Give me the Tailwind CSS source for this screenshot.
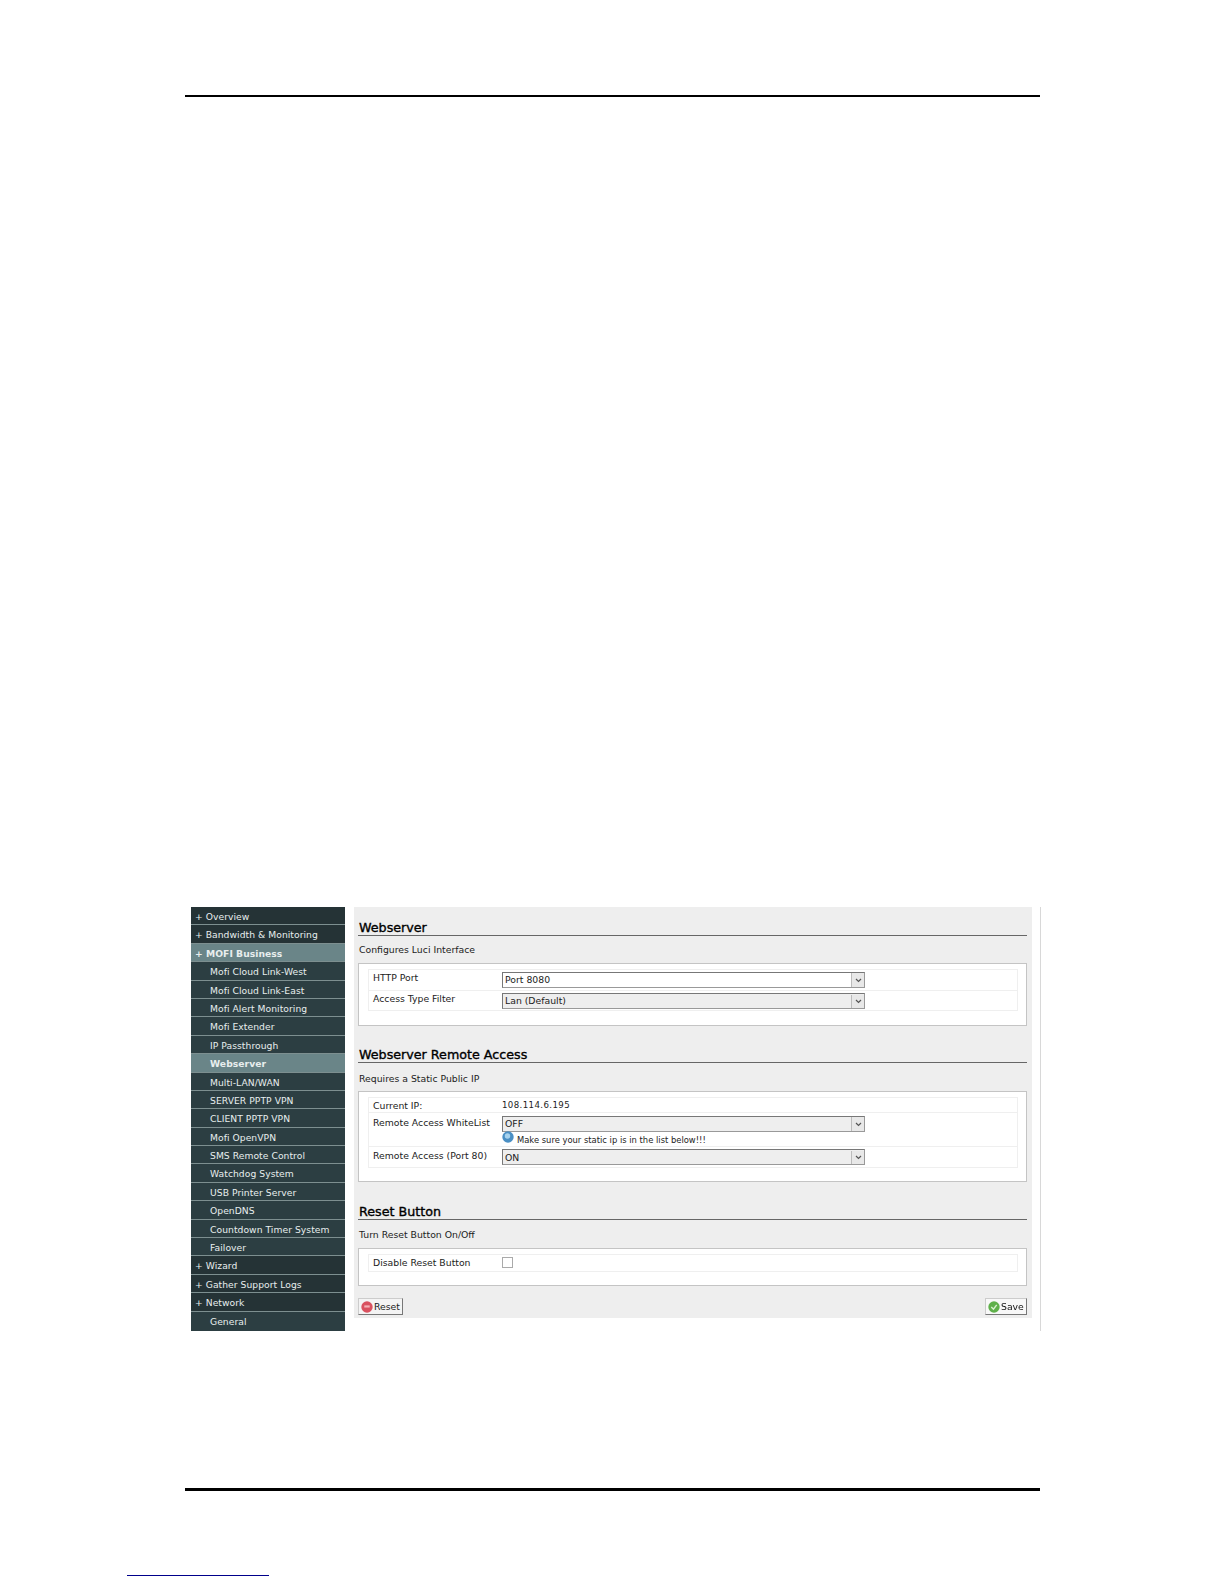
<!doctype html>
<html><head><meta charset="utf-8"><script src="https://cdn.jsdelivr.net/npm/@tailwindcss/browser@4"></script></head>
<body class="bg-white font-['DejaVu_Sans',sans-serif] text-[#222]">
<div class="relative h-[1584px] w-[1224px] overflow-hidden pt-[95px]">
  <div class="ml-[185px] h-[2px] w-[855px] bg-black"></div>
  <div class="ml-[191px] mt-[810px] flex h-[424px] w-[851px] items-start blur-[0.5px]">
    <ul class="h-[424px] w-[154px] shrink-0 overflow-hidden bg-[#2c3e42] text-[9.2px] leading-[17.4px] tracking-[0.05px] text-[#e8eeee]">
      <li class="border-b border-[#7d8f90] bg-[#253336] pl-[4px] pt-[2px] h-[18.400px] leading-[16px]">+ <span>Overview</span></li>
      <li class="border-b border-[#7d8f90] bg-[#253336] pl-[4px] pt-[2px] h-[18.400px] leading-[16px]">+ <span>Bandwidth &amp; Monitoring</span></li>
      <li class="border-b border-[#7d8f90] bg-[#6a8588] pl-[4px] pt-[2px] h-[18.400px] leading-[16px] font-bold">+ <span>MOFI Business</span></li>
      <li class="border-b border-[#7d8f90] pl-[19px] pt-[2px] h-[18.400px] leading-[16px]">Mofi Cloud Link-West</li>
      <li class="border-b border-[#7d8f90] pl-[19px] pt-[2px] h-[18.400px] leading-[16px]">Mofi Cloud Link-East</li>
      <li class="border-b border-[#7d8f90] pl-[19px] pt-[2px] h-[18.400px] leading-[16px]">Mofi Alert Monitoring</li>
      <li class="border-b border-[#7d8f90] pl-[19px] pt-[2px] h-[18.400px] leading-[16px]">Mofi Extender</li>
      <li class="border-b border-[#7d8f90] pl-[19px] pt-[2px] h-[18.400px] leading-[16px]">IP Passthrough</li>
      <li class="border-b border-[#7d8f90] bg-[#6a8588] pl-[19px] pt-[2px] h-[18.400px] leading-[16px] font-bold">Webserver</li>
      <li class="border-b border-[#7d8f90] pl-[19px] pt-[2px] h-[18.400px] leading-[16px]">Multi-LAN/WAN</li>
      <li class="border-b border-[#7d8f90] pl-[19px] pt-[2px] h-[18.400px] leading-[16px]">SERVER PPTP VPN</li>
      <li class="border-b border-[#7d8f90] pl-[19px] pt-[2px] h-[18.400px] leading-[16px]">CLIENT PPTP VPN</li>
      <li class="border-b border-[#7d8f90] pl-[19px] pt-[2px] h-[18.400px] leading-[16px]">Mofi OpenVPN</li>
      <li class="border-b border-[#7d8f90] pl-[19px] pt-[2px] h-[18.400px] leading-[16px]">SMS Remote Control</li>
      <li class="border-b border-[#7d8f90] pl-[19px] pt-[2px] h-[18.400px] leading-[16px]">Watchdog System</li>
      <li class="border-b border-[#7d8f90] pl-[19px] pt-[2px] h-[18.400px] leading-[16px]">USB Printer Server</li>
      <li class="border-b border-[#7d8f90] pl-[19px] pt-[2px] h-[18.400px] leading-[16px]">OpenDNS</li>
      <li class="border-b border-[#7d8f90] pl-[19px] pt-[2px] h-[18.400px] leading-[16px]">Countdown Timer System</li>
      <li class="border-b border-[#7d8f90] pl-[19px] pt-[2px] h-[18.400px] leading-[16px]">Failover</li>
      <li class="border-b border-[#7d8f90] bg-[#253336] pl-[4px] pt-[2px] h-[18.400px] leading-[16px]">+ <span>Wizard</span></li>
      <li class="border-b border-[#7d8f90] bg-[#253336] pl-[4px] pt-[2px] h-[18.400px] leading-[16px]">+ <span>Gather Support Logs</span></li>
      <li class="border-b border-[#7d8f90] bg-[#253336] pl-[4px] pt-[2px] h-[18.400px] leading-[16px]">+ <span>Network</span></li>
      <li class="pl-[19px] pt-[2px] leading-[16px]">General</li>
    </ul>
    <main class="ml-[9px] h-[411px] w-[678px] shrink-0 bg-[#eeeeee] pl-[4px] pr-[5px] pt-[12px] text-[9.3px]">
      <h2 class="h-[17px] border-b border-[#666] pl-[1px] text-[12.7px] leading-[17px] text-black [-webkit-text-stroke:0.35px_#000]">Webserver</h2>
      <p class="mt-[8px] h-[12px] pl-[1px] leading-[12px]">Configures Luci Interface</p>
      <section class="mt-[7px] h-[63px] border border-[#c4c4c4] bg-white pl-[9px] pr-[8px] pt-[5px]">
        <div class="flex h-[21px] items-center border border-b-0 border-[#efefef] pl-[4px]"><span class="mb-[4px] w-[129px]">HTTP Port</span>
          <div class="flex h-[16px] w-[363px] items-center justify-between border border-[#999] border-t-[#777] border-l-[#777] bg-white pl-[2px]">Port 8080<span class="flex h-full w-[13px] items-center justify-center border-l border-[#bbb] bg-[#e8e8e8]"><svg width="7" height="5" viewBox="0 0 7 5"><path d="M1 1l2.500 2.500L6 1" fill="none" stroke="#555" stroke-width="1.200"/></svg></span></div></div>
        <div class="flex h-[21px] items-center border border-t-[#efefef] border-[#efefef] pl-[4px]"><span class="mb-[3px] w-[129px]">Access Type Filter</span>
          <div class="flex h-[16px] w-[363px] items-center justify-between border border-[#999] border-t-[#777] border-l-[#777] bg-[#eeeeee] pl-[2px] pt-[1px]">Lan (Default)<span class="flex h-full w-[13px] items-center justify-center border-l border-[#bbb] bg-[#e8e8e8]"><svg width="7" height="5" viewBox="0 0 7 5"><path d="M1 1l2.500 2.500L6 1" fill="none" stroke="#555" stroke-width="1.200"/></svg></span></div></div>
      </section>
      <h2 class="mt-[21px] h-[16px] border-b border-[#666] pl-[1px] text-[12.7px] leading-[15px] text-black [-webkit-text-stroke:0.35px_#000]">Webserver Remote Access</h2>
      <p class="mt-[10px] h-[12px] pl-[1px] leading-[12px]">Requires a Static Public IP</p>
      <section class="mt-[6px] h-[91px] border border-[#c4c4c4] bg-white pl-[9px] pr-[8px] pt-[5px]">
        <div class="flex h-[16px] items-center border border-[#efefef] pl-[4px]"><span class="mt-[1px] w-[129px]">Current IP:</span><span class="text-[8.6px] tracking-[0.4px]">108.114.6.195</span></div>
        <div class="flex h-[34px] border-x border-b border-[#efefef] pl-[4px]"><span class="mt-[3px] w-[129px]">Remote Access WhiteList</span>
          <div class="pt-[3px]">
            <div class="flex h-[16px] w-[363px] items-center justify-between border border-[#999] border-t-[#777] border-l-[#777] bg-[#eeeeee] pl-[2px]">OFF<span class="flex h-full w-[13px] items-center justify-center border-l border-[#bbb] bg-[#e8e8e8]"><svg width="7" height="5" viewBox="0 0 7 5"><path d="M1 1l2.500 2.500L6 1" fill="none" stroke="#555" stroke-width="1.200"/></svg></span></div>
            <div class="flex h-[14px] items-center text-[8.4px]"><svg class="mr-[3px] mb-[4px]" width="12" height="12" viewBox="0 0 11 11"><circle cx="5.500" cy="5.500" r="5.200" fill="#4a8fc4"/><circle cx="5" cy="4.500" r="2.500" fill="#a6d2ee"/></svg><span class="mt-[2px]">Make sure your static ip is in the list below!!!</span></div>
          </div></div>
        <div class="flex h-[21px] items-center border-x border-b border-[#efefef] pl-[4px]"><span class="mb-[2px] w-[129px]">Remote Access (Port 80)</span>
          <div class="flex h-[16px] w-[363px] items-center justify-between border border-[#999] border-t-[#777] border-l-[#777] bg-[#eeeeee] pl-[2px] pt-[1px]">ON<span class="flex h-full w-[13px] items-center justify-center border-l border-[#bbb] bg-[#e8e8e8]"><svg width="7" height="5" viewBox="0 0 7 5"><path d="M1 1l2.500 2.500L6 1" fill="none" stroke="#555" stroke-width="1.200"/></svg></span></div></div>
      </section>
      <h2 class="mt-[22px] h-[16px] border-b border-[#666] pl-[1px] text-[12.7px] leading-[15px] text-black [-webkit-text-stroke:0.35px_#000]">Reset Button</h2>
      <p class="mt-[9px] h-[12px] pl-[1px] leading-[12px]">Turn Reset Button On/Off</p>
      <section class="mt-[7px] h-[38px] border border-[#c4c4c4] bg-white pl-[9px] pr-[8px] pt-[5px]">
        <div class="flex h-[18px] items-center border border-[#efefef] pl-[4px]"><span class="w-[129px]">Disable Reset Button</span><span class="mb-[2px] h-[11px] w-[11px] border border-[#aaa] bg-white"></span></div>
      </section>
      <div class="mt-[12px] flex justify-between">
        <button class="flex h-[17px] w-[45px] items-center border border-[#777] border-t-[#ccc] border-l-[#ccc] bg-[#f4f4f4] pl-[2px] text-[#222]"><svg class="mr-[1px]" width="12" height="12" viewBox="0 0 11 11"><circle cx="5.500" cy="5.500" r="5.200" fill="#d9515f"/><path d="M3 5h5" stroke="#f3b0b6" stroke-width="2"/></svg>Reset</button>
        <button class="flex h-[17px] w-[42px] items-center border border-[#777] border-t-[#ccc] border-l-[#ccc] bg-[#f8f8f8] pl-[2px] text-[#111]"><svg class="mr-[1px]" width="12" height="12" viewBox="0 0 11 11"><circle cx="5.500" cy="5.500" r="5.200" fill="#5fb04a"/><path d="M3 5.500l2 2 3-4" fill="none" stroke="#d8f0cf" stroke-width="1.300"/></svg>Save</button>
      </div>
    </main>
    <div class="ml-[8px] h-[424px] w-px shrink-0 bg-[#d8d8d8]"></div>
  </div>
  <div class="ml-[185px] mt-[157px] h-[3px] w-[855px] bg-black"></div>
  <div class="ml-[127px] mt-[84px] h-px w-[142px] bg-[#00008b]"></div>
</div>
</body></html>
